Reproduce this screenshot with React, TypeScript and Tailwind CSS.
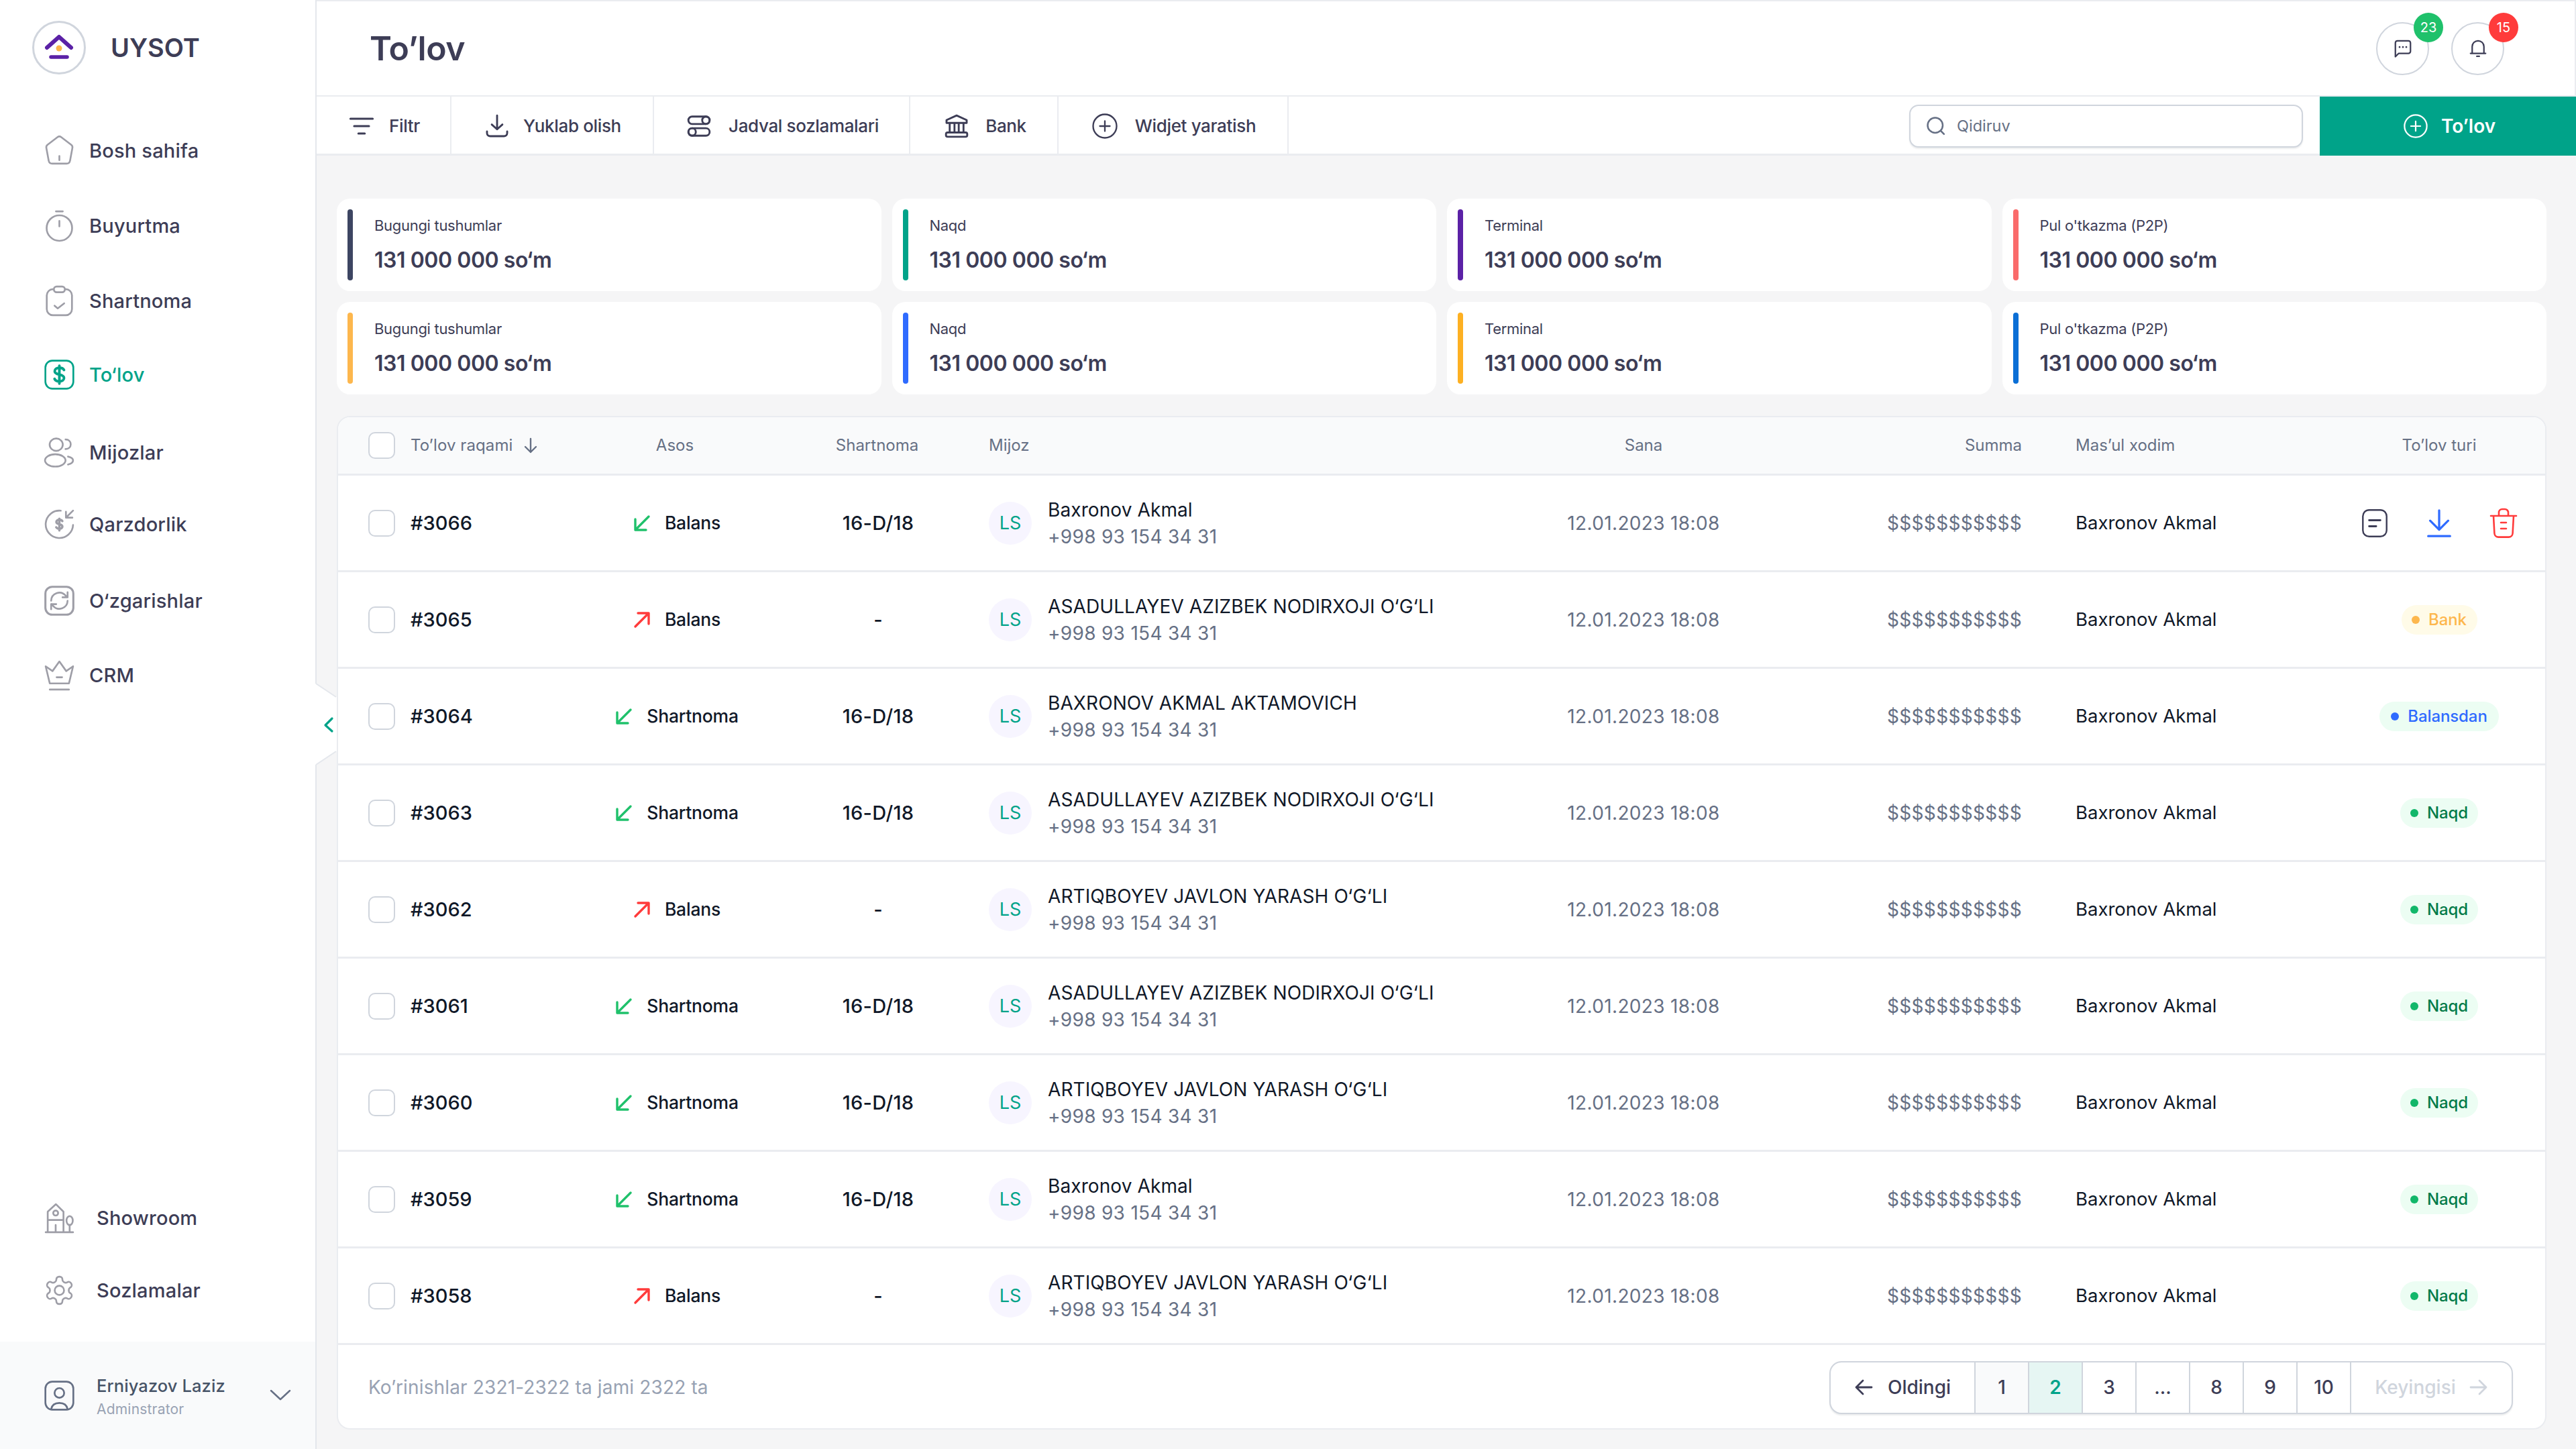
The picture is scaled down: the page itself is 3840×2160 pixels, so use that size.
import React from "react";

const Svg = ({ size = 42, sw = 1.6, className = "", children }: { size?: number; sw?: number; className?: string; children: React.ReactNode }) => (
  <svg width={size} height={size} viewBox="0 0 24 24" fill="none" stroke="currentColor" strokeWidth={sw} strokeLinecap="round" strokeLinejoin="round" className={`shrink-0 ${className}`}>
    {children}
  </svg>
);

const dollar = "M12 5.500v13M15.400 8.600c-.5-1-1.700-1.600-3.400-1.600-1.900 0-3.400.9-3.400 2.400s1.500 2.100 3.400 2.500 3.400 1 3.400 2.500-1.500 2.500-3.400 2.500c-1.700 0-3-.7-3.500-1.800";

const Logo = () => (
  <div className="w-[80px] h-[80px] rounded-full border-[3px] border-[#d0d5dd] flex items-center justify-center shrink-0">
    <svg width="44" height="40" viewBox="0 0 44 40" fill="none">
      <path d="M4 20 L22 4 L40 20" stroke="#5b21a6" strokeWidth="6" strokeLinecap="round" strokeLinejoin="round" />
      <circle cx="22" cy="21" r="4.500" fill="#fdb74d" />
      <path d="M10 34 H34" stroke="#5b21a6" strokeWidth="5.500" strokeLinecap="round" />
    </svg>
  </div>
);

const icons: Record<string, React.ReactNode> = {
  home: <><path d="M10.600 2.200a2.300 2.300 0 0 1 2.800 0l7.200 5.500c.8.600 1.100 1.500.9 2.400l-1.700 9.200c-.2 1.300-1.200 2.200-2.500 2.200H6.700c-1.300 0-2.300-.9-2.500-2.200L2.500 10.100c-.2-.9.100-1.800.9-2.400z" /><path d="M12 16v3" /></>,
  timer: <><circle cx="12" cy="13.700" r="9.300" /><path d="M9.500 1.500h5M12 8.500v4" /></>,
  clip: <><rect x="2.800" y="3.500" width="18.400" height="19" rx="4.500" /><rect x="8" y="1.500" width="8" height="4.200" rx="2" fill="#fff" /><path d="M8.500 15.500l2.300 2 4.700-3.700" /></>,
  pay: <><rect x="1.800" y="1.800" width="20.400" height="20.400" rx="5" /><path d={dollar} strokeWidth="1.900" /></>,
  users: <><ellipse cx="9.700" cy="6.300" rx="4.800" ry="4.500" /><ellipse cx="9" cy="17.800" rx="7.500" ry="4.500" /><path d="M16.500 2.500c2.300 0 3.800 1.500 3.800 3.500s-1.500 3.500-3.800 3.500M18.300 15c2.200.5 3.700 1.500 3.700 2.800s-1.500 2.500-3.700 3" /></>,
  debt: <><path d="M13 2.100A10 10 0 1 0 22 12.500" /><path d="M22 2l-5 5M16.800 2.800V7.200H21.500" /><path d="M12 8v8.500M14.200 9.700c-.4-.7-1.200-1-2.200-1-1.200 0-2.200.6-2.200 1.600s1 1.400 2.200 1.700 2.200.7 2.200 1.700-1 1.600-2.200 1.600c-1 0-1.900-.4-2.300-1.100" strokeWidth="1.700" /></>,
  sync: <><rect x="1.800" y="1.800" width="20.400" height="20.400" rx="5" strokeWidth="1.500" /><path d="M6 12a6 6 0 0 1 10.500-3.800L18 9.500M18 5.800v3.700h-3.700M18 12a6 6 0 0 1-10.500 3.800L6 14.500M6 18.200v-3.700h3.700" /></>,
  crown: <><path d="M5 18L2 5.500l5 3.500 5-7 5 7 5-3.500L19 18z" /><path d="M10 13.500h4M5 22.500h14" /></>,
  show: <><path d="M2 22.500h20M3.500 22V7.500L9.500 2l5.500 5.500V22M3.500 13.500h11.500M9.300 22v-4.800" /><circle cx="9.300" cy="8.500" r="1.800" /><path d="M19.500 22v-5" /><ellipse cx="19.500" cy="14" rx="2.300" ry="3.300" /></>,
  gear: <><circle cx="12" cy="12" r="3.400" /><path d="M12.220 2h-.44a2 2 0 0 0-2 2v.18a2 2 0 0 1-1 1.730l-.43.250a2 2 0 0 1-2 0l-.15-.080a2 2 0 0 0-2.730.730l-.220.380a2 2 0 0 0 .730 2.730l.150.100a2 2 0 0 1 1 1.720v.510a2 2 0 0 1-1 1.740l-.150.090a2 2 0 0 0-.730 2.730l.220.380a2 2 0 0 0 2.730.730l.150-.080a2 2 0 0 1 2 0l.430.250a2 2 0 0 1 1 1.730V20a2 2 0 0 0 2 2h.440a2 2 0 0 0 2-2v-.180a2 2 0 0 1 1-1.730l.430-.250a2 2 0 0 1 2 0l.150.080a2 2 0 0 0 2.730-.730l.220-.390a2 2 0 0 0-.730-2.730l-.150-.080a2 2 0 0 1-1-1.740v-.500a2 2 0 0 1 1-1.740l.150-.090a2 2 0 0 0 .730-2.730l-.220-.380a2 2 0 0 0-2.730-.730l-.150.080a2 2 0 0 1-2 0l-.430-.250a2 2 0 0 1-1-1.730V4a2 2 0 0 0-2-2z" /></>,
};

const NavItem = ({ icon, label, active, gap = "gap-[24px]", h = "h-[112px]" }: { icon: string; label: string; active?: boolean; gap?: string; h?: string }) => (
  <div className={`flex items-center pl-[67px] ${gap} ${h} ${active ? "text-[#00a389]" : "text-[#3d3d56]"}`}>
    <span className={`w-[42px] h-[42px] flex items-center justify-center shrink-0 ${active ? "text-[#00a389]" : "text-[#9e9ea7]"}`}>
      <Svg size={49} sw={1.300}>{icons[icon]}</Svg>
    </span>
    <span className="text-[29px] font-medium tracking-[0.2px] leading-none">{label}</span>
  </div>
);

const Sidebar = () => (
  <aside className="w-[472px] h-full shrink-0 bg-white border-r-2 border-[#e4e7ec] flex flex-col">
    <div className="h-[142px] flex items-center pl-[48px] gap-[37px]">
      <Logo />
      <span className="text-[38px] font-semibold text-[#3d3d56] leading-none">UYSOT</span>
    </div>
    <nav className="mt-[26px] flex flex-col">
      <NavItem icon="home" label="Bosh sahifa" />
      <NavItem icon="timer" label="Buyurtma" />
      <NavItem icon="clip" label="Shartnoma" />
      <NavItem icon="pay" label="To‘lov" active h="h-[108px]" />
      <NavItem icon="users" label="Mijozlar" h="h-[124px]" />
      <NavItem icon="debt" label="Qarzdorlik" h="h-[90px]" />
      <NavItem icon="sync" label="O‘zgarishlar" h="h-[138px]" />
      <NavItem icon="crown" label="CRM" h="h-[84px]" />
    </nav>
    <div className="flex-1" />
    <div className="flex flex-col mb-[23px]">
      <NavItem icon="show" label="Showroom" gap="gap-[35px]" h="h-[108px]" />
      <NavItem icon="gear" label="Sozlamalar" gap="gap-[35px]" h="h-[108px]" />
    </div>
    <div className="h-[160px] bg-[#f9fafb] flex items-center pl-[67px] pr-[36px]">
      <span className="w-[42px] h-[42px] flex items-center justify-center shrink-0 text-[#667085]">
        <Svg size={49} sw={1.300}>
          <rect x="1.800" y="1.800" width="20.400" height="20.400" rx="5" />
          <circle cx="12" cy="10" r="3.500" />
          <path d="M6 21.800c.6-3 3-4.500 6-4.500s5.400 1.500 6 4.500" />
        </Svg>
      </span>
      <div className="ml-[35px] pt-[4px] flex flex-col gap-[11px] flex-1">
        <span className="text-[25.500px] font-medium leading-none text-[#475467] tracking-[0.1px]">Erniyazov Laziz</span>
        <span className="text-[21px] leading-none text-[#98a2b3] tracking-[0.2px]">Adminstrator</span>
      </div>
      <svg width="32" height="18" viewBox="0 0 32 18" fill="none" stroke="#667085" strokeWidth="2.500" strokeLinecap="round" strokeLinejoin="round">
        <path d="M2 2 L16 15 L30 2" />
      </svg>
    </div>
  </aside>
);

const RoundBtn = ({ badge, color, children }: { badge: string; color: string; children: React.ReactNode }) => (
  <div className="relative w-[79px] h-[79px] rounded-full border-2 border-[#d0d5dd] flex items-center justify-center text-[#3d3d56]">
    {children}
    <span className={`absolute left-[54px] top-[-16px] w-[44px] h-[44px] rounded-full text-white text-[20px] flex items-center justify-center ${color}`}>{badge}</span>
  </div>
);

const Tool = ({ label, children, w, gap = "gap-[24px]" }: { label: string; children: React.ReactNode; w: string; gap?: string }) => (
  <div className={`h-full pt-[3px] border-r-2 border-[#eaecf0] flex items-center justify-center text-[#3d3d56] ${gap} ${w}`}>
    {children}
    <span className="text-[26px] font-medium leading-none tracking-[-0.35px]">{label}</span>
  </div>
);

const Topbar = () => (
  <>
    <header className="h-[144px] shrink-0 bg-white border-t-2 border-b-2 border-r-2 border-[#eaecf0] flex items-center justify-between pl-[79px] pr-[105px]">
      <h1 className="text-[50px] font-semibold text-[#3d3d56] leading-none tracking-[-0.5px]">To’lov</h1>
      <div className="flex items-center gap-[33px]">
        <RoundBtn badge="23" color="bg-[#1fc16b]">
          <Svg size={30} sw={1.800}>
            <path d="M5.500 3h13A2.500 2.500 0 0 1 21 5.500v10a2.500 2.500 0 0 1-2.500 2.500H7l-4 4V5.500A2.500 2.500 0 0 1 5.500 3z" />
            <path d="M8 10.500h.01M12 10.500h.01M16 10.500h.01" strokeWidth="2.200" />
          </Svg>
        </RoundBtn>
        <RoundBtn badge="15" color="bg-[#ff3b3b]">
          <Svg size={30} sw={1.800}>
            <path d="M5 18V10a7 7 0 0 1 14 0v8zM3 18h18M10.500 21.500h3" />
          </Svg>
        </RoundBtn>
      </div>
    </header>
    <div className="h-[88px] shrink-0 bg-white border-b-[3px] border-[#eaecf0] flex items-stretch">
      <Tool label="Filtr" w="w-[201px] pl-[3px]" gap="gap-[22px]">
        <Svg size={38} sw={1.900}><path d="M1.500 5h21M5 12h14M9 19h6" /></Svg>
      </Tool>
      <Tool label="Yuklab olish" w="w-[302px] pl-[2px]" gap="gap-[20px]">
        <Svg size={38} sw={1.800}><path d="M12 2v13M7 10.500l5 4.500 5-4.500M2.500 17v1.500a3 3 0 0 0 3 3h13a3 3 0 0 0 3-3V17" /></Svg>
      </Tool>
      <Tool label="Jadval sozlamalari" w="w-[382px] pl-[3px]" gap="gap-[25px]">
        <Svg size={38} sw={1.800}>
          <rect x="2" y="3" width="20" height="7" rx="3.500" />
          <circle cx="18.500" cy="6.500" r="3.500" />
          <rect x="2" y="14" width="20" height="7" rx="3.500" />
          <circle cx="5.500" cy="17.500" r="3.500" />
        </Svg>
      </Tool>
      <Tool label="Bank" w="w-[221px] pl-[4px]">
        <Svg size={38} sw={1.800}>
          <path d="M12 2l9.500 4.300v2.700h-19V6.300zM5.500 9v9M10 9v9M14 9v9M18.500 9v9" />
          <rect x="2" y="18" width="20" height="4" rx="1.500" />
        </Svg>
      </Tool>
      <Tool label="Widjet yaratish" w="w-[343px] pl-[2px]" gap="gap-[25px]">
        <Svg size={40} sw={1.400}>
          <circle cx="12" cy="12" r="10.500" />
          <path d="M12 7.500v9M7.500 12h9" />
        </Svg>
      </Tool>
      <div className="flex-1 flex items-center justify-end">
        <div className="w-[587px] h-[64px] mt-[3px] rounded-[14px] border-2 border-[#d0d5dd] shadow-[0_2px_2px_rgba(16,24,40,0.08)] flex items-center pl-[23px] gap-[16px] mr-[25px] bg-white text-[#667085]">
          <Svg size={30} sw={2}><circle cx="11" cy="11" r="9" /><path d="M18 18l3.500 3.500" /></Svg>
          <span className="text-[23.500px] leading-none text-[#667085]">Qidiruv</span>
        </div>
        <div className="w-[382px] h-[88px] self-start pl-[4px] bg-[#00a389] flex items-center justify-center gap-[19px] text-white">
          <Svg size={38} sw={1.400}>
            <circle cx="12" cy="12" r="10.500" />
            <path d="M12 7.500v9M7.500 12h9" />
          </Svg>
          <span className="text-[28px] font-semibold leading-none">To’lov</span>
        </div>
      </div>
    </div>
  </>
);

const Stat = ({ label, bar }: { label: string; bar: string }) => (
  <div className="h-[138px] rounded-[20px] bg-white p-4 flex gap-[32px]">
    <div className={`w-2 rounded-full ${bar}`} />
    <div className="flex flex-col pt-[13px] gap-[25px]">
      <span className="text-[22px] leading-none text-[#3d3d56] tracking-[-0.3px]">{label}</span>
      <span className="text-[32px] font-semibold leading-none text-[#3d3d56] tracking-[-0.45px]">131 000 000 so‘m</span>
    </div>
  </div>
);

const stats: [string, string][] = [
  ["Bugungi tushumlar", "bg-[#3d4562]"],
  ["Naqd", "bg-[#00a389]"],
  ["Terminal", "bg-[#5b21a6]"],
  ["Pul o'tkazma (P2P)", "bg-[#fa6b6b]"],
  ["Bugungi tushumlar", "bg-[#fdb74d]"],
  ["Naqd", "bg-[#2f6bff]"],
  ["Terminal", "bg-[#fdb022]"],
  ["Pul o'tkazma (P2P)", "bg-[#0b6fd6]"],
];

const ASAD = "ASADULLAYEV AZIZBEK NODIRXOJI O‘G‘LI";
const ARTI = "ARTIQBOYEV JAVLON YARASH O‘G‘LI";

type Row = { id: string; asos: "Balans" | "Shartnoma"; out?: boolean; name: string; type: string };
const rows: Row[] = [
  { id: "#3066", asos: "Balans", name: "Baxronov Akmal", type: "actions" },
  { id: "#3065", asos: "Balans", out: true, name: ASAD, type: "Bank" },
  { id: "#3064", asos: "Shartnoma", name: "BAXRONOV AKMAL AKTAMOVICH", type: "Balansdan" },
  { id: "#3063", asos: "Shartnoma", name: ASAD, type: "Naqd" },
  { id: "#3062", asos: "Balans", out: true, name: ARTI, type: "Naqd" },
  { id: "#3061", asos: "Shartnoma", name: ASAD, type: "Naqd" },
  { id: "#3060", asos: "Shartnoma", name: ARTI, type: "Naqd" },
  { id: "#3059", asos: "Shartnoma", name: "Baxronov Akmal", type: "Naqd" },
  { id: "#3058", asos: "Balans", out: true, name: ARTI, type: "Naqd" },
];

const Check = () => <div className="w-[40px] h-[40px] rounded-[10px] border-2 border-[#d0d5dd] bg-white shrink-0" />;

const Pill = ({ type }: { type: string }) => {
  const s =
    type === "Bank"
      ? { bg: "bg-[#fffbe8]", dot: "bg-[#fdb74d]", text: "text-[#fdb74d]", w: "w-[113px]" }
      : type === "Balansdan"
      ? { bg: "bg-[#ecfdf3]", dot: "bg-[#2f6bff]", text: "text-[#2f6bff]", w: "w-[178px]" }
      : { bg: "bg-[#ecfdf3]", dot: "bg-[#12b76a]", text: "text-[#027a48]", w: "w-[116px]" };
  return (
    <span className={`h-[44px] rounded-full inline-flex items-center justify-center gap-[13px] ${s.bg} ${s.w}`}>
      <span className={`w-[12px] h-[12px] rounded-full ${s.dot}`} />
      <span className={`text-[24px] font-medium leading-none tracking-[-0.1px] ${s.text}`}>{type}</span>
    </span>
  );
};

const Actions = () => (
  <div className="flex items-center justify-center gap-[52px]">
    <span className="w-[44px] h-[44px] flex items-center justify-center text-[#3d3d56]">
      <Svg size={50} sw={1.150}>
        <rect x="3.500" y="2.500" width="17" height="19" rx="4.500" />
        <path d="M8 9.800h8M8 14.200h5" strokeWidth="1.400" />
      </Svg>
    </span>
    <span className="w-[44px] h-[44px] flex items-center justify-center text-[#2f6bff]">
      <Svg size={46} sw={1.700}>
        <path d="M12 2V17M5 10l7 7 7-7M3.500 22h17" />
      </Svg>
    </span>
    <span className="w-[44px] h-[44px] flex items-center justify-center text-[#ff3b3b]">
      <Svg size={48} sw={1.300}>
        <path d="M2.500 6.500h19M4.500 6.500l.7 13a3 3 0 0 0 3 2.800h7.600a3 3 0 0 0 3-2.800l.7-13M8.500 6V4a2.500 2.500 0 0 1 2.500-2.500h2A2.500 2.500 0 0 1 15.500 4v2M10 11.500h4M10 16h4" />
      </Svg>
    </span>
  </div>
);

const grid = "grid grid-cols-[328px_354px_248px_768px_500px_314px_464px_1fr] items-center";

const TableRow = ({ r }: { r: Row }) => (
  <div className={`${grid} -ml-[2px] h-[144px] border-b-[3px] border-[#eaecf0] text-[#101828]`}>
    <div className="flex items-center pl-[47px] gap-[23px]">
      <Check />
      <span className="text-[29px] font-medium leading-none">{r.id}</span>
    </div>
    <div className="flex items-center justify-center gap-[21px] pl-[4px]">
      {r.out ? (
        <svg width="26" height="26" viewBox="0 0 26 26" fill="none" stroke="#ff3b3b" strokeWidth="3.400" strokeLinecap="round" strokeLinejoin="round" className="shrink-0">
          <path d="M3 23 L23 3 M7 3 H23 V19" />
        </svg>
      ) : (
        <svg width="26" height="26" viewBox="0 0 26 26" fill="none" stroke="#1fc16b" strokeWidth="3.400" strokeLinecap="round" strokeLinejoin="round" className="shrink-0">
          <path d="M23 3 L3 23 M3 7 V23 H19" />
        </svg>
      )}
      <span className="text-[26.500px] font-medium leading-none tracking-[-0.2px]">{r.asos}</span>
    </div>
    <div className="text-center pl-[2px] text-[29px] font-medium leading-none tracking-[0.3px]">{r.out ? "-" : "16-D/18"}</div>
    <div className="flex items-center pl-[42px] gap-[24px]">
      <div className="w-[64px] h-[64px] rounded-full bg-[#f7f5ff] flex items-center justify-center text-[#00a389] text-[27px] leading-none shrink-0">LS</div>
      <div className="flex flex-col gap-[12px]">
        <span className="text-[28px] leading-[28px] tracking-[0.1px]">{r.name}</span>
        <span className="text-[28px] leading-[28px] text-[#667085] tracking-[0.3px]">+998 93 154 34 31</span>
      </div>
    </div>
    <div className="text-center text-[28px] leading-none text-[#667085] tracking-[0.35px]">12.01.2023 18:08</div>
    <div className="text-right text-[28px] leading-none text-[#667085] tracking-[0.3px]">$$$$$$$$$$$</div>
    <div className="pl-[80px] text-[27.500px] leading-none">Baxronov Akmal</div>
    <div className="flex justify-center">{r.type === "actions" ? <Actions /> : <Pill type={r.type} />}</div>
  </div>
);

const Table = () => (
  <div className="mt-[32px] rounded-[20px] bg-white border-2 border-[#eaecf0] overflow-hidden flex flex-col">
    <div className={`${grid} -ml-[2px] h-[87px] bg-[#f9fafb] border-b-[3px] border-[#eaecf0] text-[24px] text-[#667085] leading-none`}>
      <div className="flex items-center pl-[47px] gap-[23px]">
        <Check />
        <span className="tracking-[0.1px]">To’lov raqami</span>
        <svg width="24" height="26" viewBox="0 0 24 26" fill="none" stroke="#667085" strokeWidth="2.400" strokeLinecap="round" strokeLinejoin="round" className="-ml-[8px]">
          <path d="M12 3 V23 M4 15 L12 23 L20 15" />
        </svg>
      </div>
      <div className="text-center -ml-[2px]">Asos</div>
      <div className="text-center -ml-[1px]">Shartnoma</div>
      <div className="pl-[42px]">Mijoz</div>
      <div className="text-center">Sana</div>
      <div className="text-right">Summa</div>
      <div className="pl-[80px]">Mas’ul xodim</div>
      <div className="text-center">To’lov turi</div>
    </div>
    {rows.map((r) => (
      <TableRow key={r.id} r={r} />
    ))}
    <div className="h-[124px] pt-[2px] flex items-center justify-between pl-[45px] pr-[48px]">
      <span className="text-[28px] text-[#98a2b3] leading-none tracking-[0.15px]">Ko’rinishlar 2321-2322 ta jami 2322 ta</span>
      <Pagination />
    </div>
  </div>
);

const pages = ["1", "2", "3", "...", "8", "9", "10"];

const Pagination = () => (
  <div className="h-[79px] flex items-stretch rounded-[18px] border-2 border-[#d0d5dd] shadow-[0_2px_2px_rgba(16,24,40,0.08)] overflow-hidden bg-white">
    <div className="w-[214px] flex items-center justify-center gap-[22px] text-[#3d3d56]">
      <svg width="28" height="26" viewBox="0 0 28 26" fill="none" stroke="currentColor" strokeWidth="2.800" strokeLinecap="round" strokeLinejoin="round"><path d="M26 13 H3 M13 3 L3 13 L13 23" /></svg>
      <span className="text-[28px] font-medium leading-none">Oldingi</span>
    </div>
    {pages.map((p) => (
      <div
        key={p}
        className={`w-[80px] border-l-2 border-[#d0d5dd] flex items-center justify-center text-[28px] font-medium leading-none ${
          p === "2" ? "bg-[#e6f6f3] text-[#00a389] font-semibold" : p === "1" ? "bg-[#f9fafb] text-[#3d3d56]" : "text-[#3d3d56]"
        }`}
      >
        {p}
      </div>
    ))}
    <div className="w-[241px] border-l-2 border-[#d0d5dd] flex items-center justify-center gap-[20px] text-[#d0d5dd]">
      <span className="text-[28px] font-medium leading-none">Keyingisi</span>
      <svg width="28" height="26" viewBox="0 0 28 26" fill="none" stroke="currentColor" strokeWidth="2.800" strokeLinecap="round" strokeLinejoin="round"><path d="M2 13 H25 M15 3 L25 13 L15 23" /></svg>
    </div>
  </div>
);

export default function App() {
  return (
    <div className="relative w-[3840px] h-[2160px] overflow-hidden flex bg-[#f5f5f6] font-['Inter',sans-serif]">
      <Sidebar />
      <main className="flex-1 min-w-0 flex flex-col">
        <Topbar />
        <div className="pl-[30px] pr-[44px] pt-[64px] flex flex-col">
          <div className="grid grid-cols-4 gap-4">
            {stats.map(([l, b], i) => (
              <Stat key={i} label={l} bar={b} />
            ))}
          </div>
          <Table />
        </div>
      </main>
      <svg width="34" height="121" viewBox="0 0 34 121" fill="none" className="absolute left-[469px] top-[1019px]">
        <path d="M0 0 L3 0 L33 20 V101 L3 121 L0 121 Z" fill="#fff" />
        <path d="M2 0 L32 20 M32 101 L2 121" stroke="#e4e7ec" strokeWidth="2" />
        <path d="M26 52 L16 62 L26 71" stroke="#00a389" strokeWidth="3.200" strokeLinecap="round" strokeLinejoin="round" />
      </svg>
    </div>
  );
}
